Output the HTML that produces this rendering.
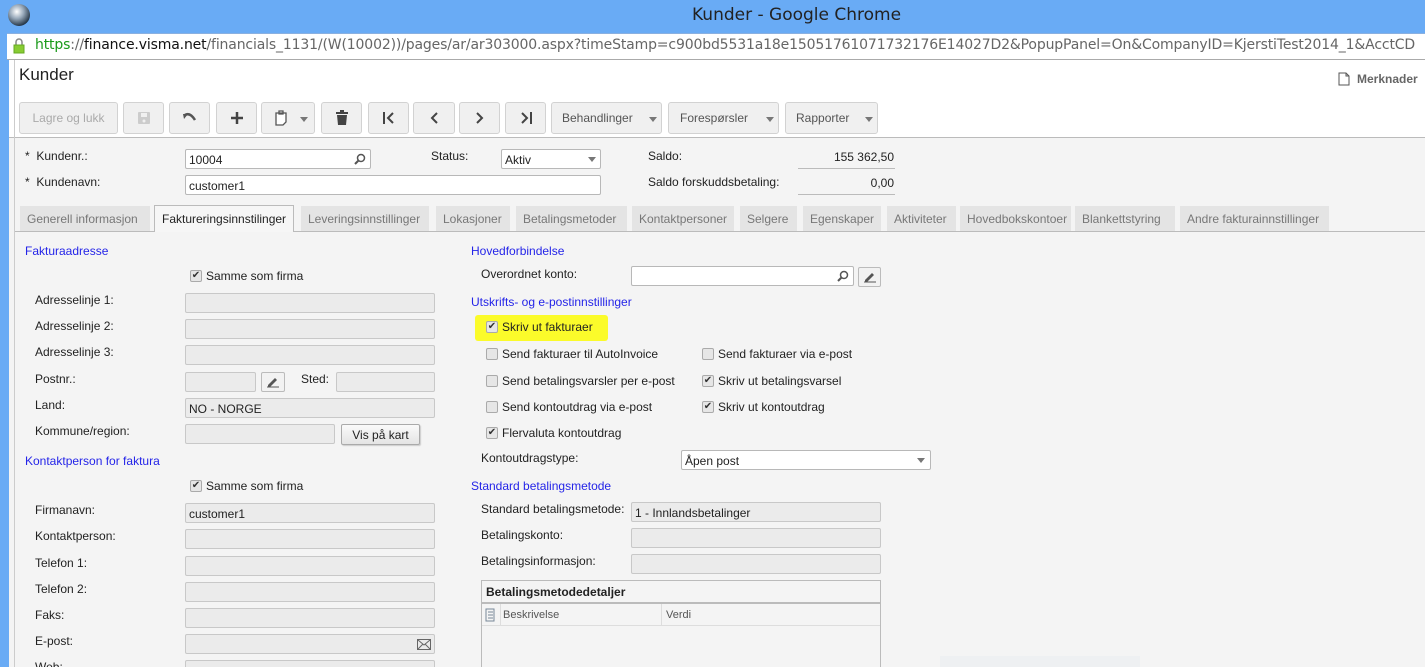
<!DOCTYPE html>
<html><head><meta charset="utf-8"><style>
*{box-sizing:border-box;margin:0;padding:0}
html,body{overflow:hidden}
body{width:1425px;height:667px;overflow:hidden;position:relative;background:#f4f4f4;font-family:"Liberation Sans",Arial,sans-serif;font-size:12px;color:#222}
.a{position:absolute;white-space:nowrap}
.in{position:absolute;height:20px;border:1px solid #c8c8c8;border-radius:2px;background:#ebebeb;font-size:12px;padding:3px 3px;color:#222}
.w{background:#fff;border-color:#b8b8b8}
.btn{position:absolute;top:102px;height:32px;border:1px solid #d2d2d2;border-radius:3px;background:#f0f0f0;color:#555;font-size:12px;display:flex;align-items:center;justify-content:center}
.lbl{position:absolute;font-size:12px;color:#222;white-space:nowrap}
.h{position:absolute;color:#2424e8;font-size:12px;white-space:nowrap}
.tab{position:absolute;top:206px;height:25px;background:#e4e4e4;color:#777;font-size:12px;padding:6px 6px 0 7px;white-space:nowrap}
.cb{position:absolute;width:12px;height:12px;border:1px solid #aaa;border-radius:2px;background:#e6e6e6;font-size:10px;line-height:10px;text-align:center;color:#333}
.dd{position:absolute;width:0;height:0;border-left:4px solid transparent;border-right:4px solid transparent;border-top:5px solid #777}
</style></head><body>
<div class="a" style="left:0;top:0;width:1425px;height:35px;background:#69abf5"></div>
<div class="a" style="left:8px;top:4px;width:22px;height:22px;border-radius:50%;background:radial-gradient(circle at 40% 35%,#fff 0,#9ab 35%,#234 75%)"></div>
<div class="a" style="left:692px;top:5px;color:#222;font-family:'DejaVu Sans','Liberation Sans',sans-serif;font-size:17px">Kunder - Google Chrome</div>
<div class="a" style="left:0;top:35px;width:9px;height:632px;background:#69abf5"></div>
<div class="a" style="left:7px;top:33px;width:1418px;height:27px;background:#fff;border-top:1px solid #8ab0e0;border-bottom:1px solid #aaa"></div>
<svg class="a" style="left:13px;top:38px" width="12" height="16"><path d="M3 7V4a3 3 0 0 1 6 0v3" fill="none" stroke="#888" stroke-width="1.5"/><rect x="1" y="7" width="10" height="8" fill="#8c3" stroke="#6a2"/></svg>
<div class="a" style="left:35px;top:37px;color:#666;font-family:'DejaVu Sans','Liberation Sans',sans-serif;font-size:14px;letter-spacing:-0.15px"><span style="color:#1a9a1a">https</span>://<span style="color:#111">finance.visma.net</span>/financials_1131/(W(10002))/pages/ar/ar303000.aspx?timeStamp=c900bd5531a18e15051761071732176E14027D2&amp;PopupPanel=On&amp;CompanyID=KjerstiTest2014_1&amp;AcctCD</div>
<div class="a" style="left:9px;top:60px;width:1416px;height:78px;background:#fff;border-bottom:1px solid #bbb"></div>
<div class="a" style="left:14px;top:60px;width:1px;height:607px;background:#ccc"></div>
<div class="a" style="left:19px;top:65px;font-size:17px;color:#222">Kunder</div>
<svg class="a" style="left:1338px;top:72px" width="12" height="14"><path d="M1 1h7l3 3v9H1z M8 1v3h3" fill="#fff" stroke="#555"/></svg>
<div class="a" style="left:1357px;top:72px;font-size:12px;font-weight:bold;color:#666">Merknader</div>
<div class="btn" style="left:19px;width:99px;color:#aaa">Lagre og lukk</div>
<div class="btn" style="left:123px;width:41px"><svg width="14" height="14"><rect x="1" y="1" width="12" height="12" rx="1" fill="#ccc"/><rect x="4" y="2" width="6" height="4" fill="#f0f0f0"/><circle cx="7" cy="10" r="1.5" fill="#f0f0f0"/></svg></div>
<div class="btn" style="left:169px;width:41px"><svg width="16" height="12"><path d="M3 3 Q8 0 13 8" fill="none" stroke="#555" stroke-width="2.5"/><path d="M1 2l5 0-4 5z" fill="#555"/></svg></div>
<div class="btn" style="left:216px;width:41px"><svg width="14" height="14"><path d="M7 1v12M1 7h12" stroke="#444" stroke-width="2.5"/></svg></div>
<div class="btn" style="left:261px;width:54px;justify-content:flex-start;padding-left:13px"><svg width="12" height="16"><path d="M1 3h10v9l-3 3H1z M4 1h4v3H4z" fill="#fff" stroke="#555" stroke-width="1.3"/></svg><span class="dd" style="left:38px;top:14px"></span></div>
<div class="btn" style="left:321px;width:41px"><svg width="14" height="16"><rect x="1" y="2" width="12" height="2" fill="#444"/><rect x="5" y="0" width="4" height="2" fill="#444"/><path d="M2 5h10l-1 10H3z" fill="#444"/></svg></div>
<div class="btn" style="left:368px;width:41px"><svg width="14" height="14"><path d="M2 1v12M11 2L6 7l5 5" fill="none" stroke="#444" stroke-width="2"/></svg></div>
<div class="btn" style="left:413px;width:42px"><svg width="10" height="14"><path d="M8 2L3 7l5 5" fill="none" stroke="#444" stroke-width="2"/></svg></div>
<div class="btn" style="left:459px;width:41px"><svg width="10" height="14"><path d="M2 2l5 5-5 5" fill="none" stroke="#444" stroke-width="2"/></svg></div>
<div class="btn" style="left:505px;width:41px"><svg width="14" height="14"><path d="M3 2l5 5-5 5M12 1v12" fill="none" stroke="#444" stroke-width="2"/></svg></div>
<div class="btn" style="left:551px;width:111px;justify-content:flex-start;padding-left:10px;color:#555">Behandlinger<span class="dd" style="left:97px;top:14px"></span></div>
<div class="btn" style="left:668px;width:111px;justify-content:flex-start;padding-left:11px;color:#555">Forespørsler<span class="dd" style="left:97px;top:14px"></span></div>
<div class="btn" style="left:785px;width:93px;justify-content:flex-start;padding-left:10px;color:#555">Rapporter<span class="dd" style="left:79px;top:14px"></span></div>

<div class="lbl" style="left:25px;top:149px">*&nbsp; Kundenr.:</div>
<div class="in w" style="left:185px;top:149px;width:186px">10004<svg width="12" height="12" style="position:absolute;right:4px;top:3px"><circle cx="7" cy="5" r="3.5" fill="none" stroke="#555" stroke-width="1.5"/><path d="M5 7l-4 4" stroke="#555" stroke-width="2"/></svg></div>
<div class="lbl" style="left:431px;top:149px">Status:</div>
<div class="in w" style="left:501px;top:149px;width:100px">Aktiv<span class="dd" style="left:86px;top:7px"></span></div>
<div class="lbl" style="left:648px;top:149px">Saldo:</div>
<div class="a" style="left:798px;top:150px;width:97px;height:19px;border-bottom:1px solid #bbb;text-align:right;padding-right:1px">155 362,50</div>
<div class="lbl" style="left:25px;top:175px">*&nbsp; Kundenavn:</div>
<div class="in w" style="left:185px;top:175px;width:416px">customer1</div>
<div class="lbl" style="left:648px;top:175px">Saldo forskuddsbetaling:</div>
<div class="a" style="left:798px;top:176px;width:97px;height:19px;border-bottom:1px solid #bbb;text-align:right;padding-right:1px">0,00</div>

<div class="a" style="left:15px;top:231px;width:1410px;height:1px;background:#bbb"></div>
<div class="tab" style="left:20px;width:130px">Generell informasjon</div>
<div class="tab" style="left:154px;width:140px;height:27px;top:205px;background:#f6f6f6;border:1px solid #bbb;border-bottom:none;color:#222">Faktureringsinnstilinger</div>
<div class="tab" style="left:301px;width:128px">Leveringsinnstillinger</div>
<div class="tab" style="left:436px;width:74px">Lokasjoner</div>
<div class="tab" style="left:516px;width:111px">Betalingsmetoder</div>
<div class="tab" style="left:632px;width:102px">Kontaktpersoner</div>
<div class="tab" style="left:740px;width:57px">Selgere</div>
<div class="tab" style="left:803px;width:78px">Egenskaper</div>
<div class="tab" style="left:887px;width:69px">Aktiviteter</div>
<div class="tab" style="left:960px;width:111px">Hovedbokskontoer</div>
<div class="tab" style="left:1075px;width:100px">Blankettstyring</div>
<div class="tab" style="left:1180px;width:149px">Andre fakturainnstillinger</div>

<div class="h" style="left:25px;top:244px">Fakturaadresse</div>
<div class="cb" style="left:190px;top:270px">✔</div><div class="lbl" style="left:206px;top:269px">Samme som firma</div>
<div class="lbl" style="left:35px;top:293px">Adresselinje 1:</div><div class="in" style="left:185px;top:293px;width:250px"></div>
<div class="lbl" style="left:35px;top:319px">Adresselinje 2:</div><div class="in" style="left:185px;top:319px;width:250px"></div>
<div class="lbl" style="left:35px;top:345px">Adresselinje 3:</div><div class="in" style="left:185px;top:345px;width:250px"></div>
<div class="lbl" style="left:35px;top:372px">Postnr.:</div><div class="in" style="left:185px;top:372px;width:71px"></div>
<div class="in" style="left:261px;top:372px;width:24px;background:#f2f2f2;border-color:#bbb"><svg width="14" height="12" style="position:absolute;left:4px;top:3px"><path d="M2 9l7-7 2 2-7 7H2z" fill="#555"/><path d="M1 11h12" stroke="#555"/></svg></div>
<div class="lbl" style="left:301px;top:372px">Sted:</div><div class="in" style="left:336px;top:372px;width:99px"></div>
<div class="lbl" style="left:35px;top:398px">Land:</div><div class="in" style="left:185px;top:398px;width:250px">NO - NORGE</div>
<div class="lbl" style="left:35px;top:424px">Kommune/region:</div><div class="in" style="left:185px;top:424px;width:150px"></div>
<div class="a" style="left:341px;top:424px;width:79px;height:21px;border:1px solid #aaa;border-radius:2px;background:linear-gradient(#fafafa,#e4e4e4);text-align:center;padding-top:3px;box-shadow:1px 1px 1px #ccc">Vis på kart</div>
<div class="h" style="left:25px;top:454px">Kontaktperson for faktura</div>
<div class="cb" style="left:190px;top:480px">✔</div><div class="lbl" style="left:206px;top:479px">Samme som firma</div>
<div class="lbl" style="left:35px;top:503px">Firmanavn:</div><div class="in" style="left:185px;top:503px;width:250px">customer1</div>
<div class="lbl" style="left:35px;top:529px">Kontaktperson:</div><div class="in" style="left:185px;top:529px;width:250px"></div>
<div class="lbl" style="left:35px;top:556px">Telefon 1:</div><div class="in" style="left:185px;top:556px;width:250px"></div>
<div class="lbl" style="left:35px;top:582px">Telefon 2:</div><div class="in" style="left:185px;top:582px;width:250px"></div>
<div class="lbl" style="left:35px;top:608px">Faks:</div><div class="in" style="left:185px;top:608px;width:250px"></div>
<div class="lbl" style="left:35px;top:634px">E-post:</div><div class="in" style="left:185px;top:634px;width:250px"><svg width="14" height="11" style="position:absolute;right:3px;top:4px"><rect x=".5" y=".5" width="13" height="10" fill="none" stroke="#666"/><path d="M1 1l6 5 6-5M1 10l5-5M13 10l-5-5" fill="none" stroke="#666"/></svg></div>
<div class="lbl" style="left:35px;top:660px">Web:</div><div class="in" style="left:185px;top:660px;width:250px"></div>

<div class="h" style="left:471px;top:244px">Hovedforbindelse</div>
<div class="lbl" style="left:481px;top:267px">Overordnet konto:</div>
<div class="in w" style="left:631px;top:266px;width:223px"><svg width="12" height="12" style="position:absolute;right:4px;top:3px"><circle cx="7" cy="5" r="3.5" fill="none" stroke="#555" stroke-width="1.5"/><path d="M5 7l-4 4" stroke="#555" stroke-width="2"/></svg></div>
<div class="in" style="left:858px;top:267px;width:23px;background:#f2f2f2;border-color:#bbb"><svg width="14" height="12" style="position:absolute;left:4px;top:3px"><path d="M2 9l7-7 2 2-7 7H2z" fill="#555"/><path d="M1 11h12" stroke="#555"/></svg></div>
<div class="h" style="left:471px;top:295px">Utskrifts- og e-postinnstillinger</div>
<div class="a" style="left:475px;top:315px;width:133px;height:26px;background:#fbfb2a;border-radius:3px"></div>
<div class="cb" style="left:486px;top:321px">✔</div><div class="lbl" style="left:502px;top:320px">Skriv ut fakturaer</div>
<div class="cb" style="left:486px;top:348px"></div><div class="lbl" style="left:502px;top:347px">Send fakturaer til AutoInvoice</div>
<div class="cb" style="left:702px;top:348px"></div><div class="lbl" style="left:718px;top:347px">Send fakturaer via e-post</div>
<div class="cb" style="left:486px;top:375px"></div><div class="lbl" style="left:502px;top:374px">Send betalingsvarsler per e-post</div>
<div class="cb" style="left:702px;top:375px">✔</div><div class="lbl" style="left:718px;top:374px">Skriv ut betalingsvarsel</div>
<div class="cb" style="left:486px;top:401px"></div><div class="lbl" style="left:502px;top:400px">Send kontoutdrag via e-post</div>
<div class="cb" style="left:702px;top:401px">✔</div><div class="lbl" style="left:718px;top:400px">Skriv ut kontoutdrag</div>
<div class="cb" style="left:486px;top:427px">✔</div><div class="lbl" style="left:502px;top:426px">Flervaluta kontoutdrag</div>
<div class="lbl" style="left:481px;top:451px">Kontoutdragstype:</div>
<div class="in w" style="left:681px;top:450px;width:250px">Åpen post<span class="dd" style="left:235px;top:7px"></span></div>
<div class="h" style="left:471px;top:479px">Standard betalingsmetode</div>
<div class="lbl" style="left:481px;top:502px">Standard betalingsmetode:</div><div class="in" style="left:631px;top:502px;width:250px">1 - Innlandsbetalinger</div>
<div class="lbl" style="left:481px;top:528px">Betalingskonto:</div><div class="in" style="left:631px;top:528px;width:250px"></div>
<div class="lbl" style="left:481px;top:554px">Betalingsinformasjon:</div><div class="in" style="left:631px;top:554px;width:250px"></div>
<div class="a" style="left:481px;top:580px;width:400px;height:90px;border:1px solid #bbb;background:#f4f4f4"></div>
<div class="a" style="left:486px;top:585px;font-weight:bold">Betalingsmetodedetaljer</div>
<div class="a" style="left:482px;top:602px;width:398px;height:2px;background:#bbb"></div>
<div class="a" style="left:482px;top:604px;width:398px;height:22px;border-bottom:1px solid #ddd"></div>
<div class="a" style="left:500px;top:604px;width:1px;height:22px;background:#ddd"></div>
<div class="a" style="left:661px;top:604px;width:1px;height:22px;background:#ddd"></div>
<svg class="a" style="left:485px;top:608px" width="10" height="14"><path d="M1 1h8v12H1zM3 4h5M3 7h5M3 10h5" fill="none" stroke="#789"/></svg>
<div class="a" style="left:503px;top:609px;font-size:11px;color:#555">Beskrivelse</div>
<div class="a" style="left:666px;top:609px;font-size:11px;color:#555">Verdi</div>
<div class="a" style="left:940px;top:656px;width:200px;height:12px;background:#eef0f2"></div>
</body></html>
